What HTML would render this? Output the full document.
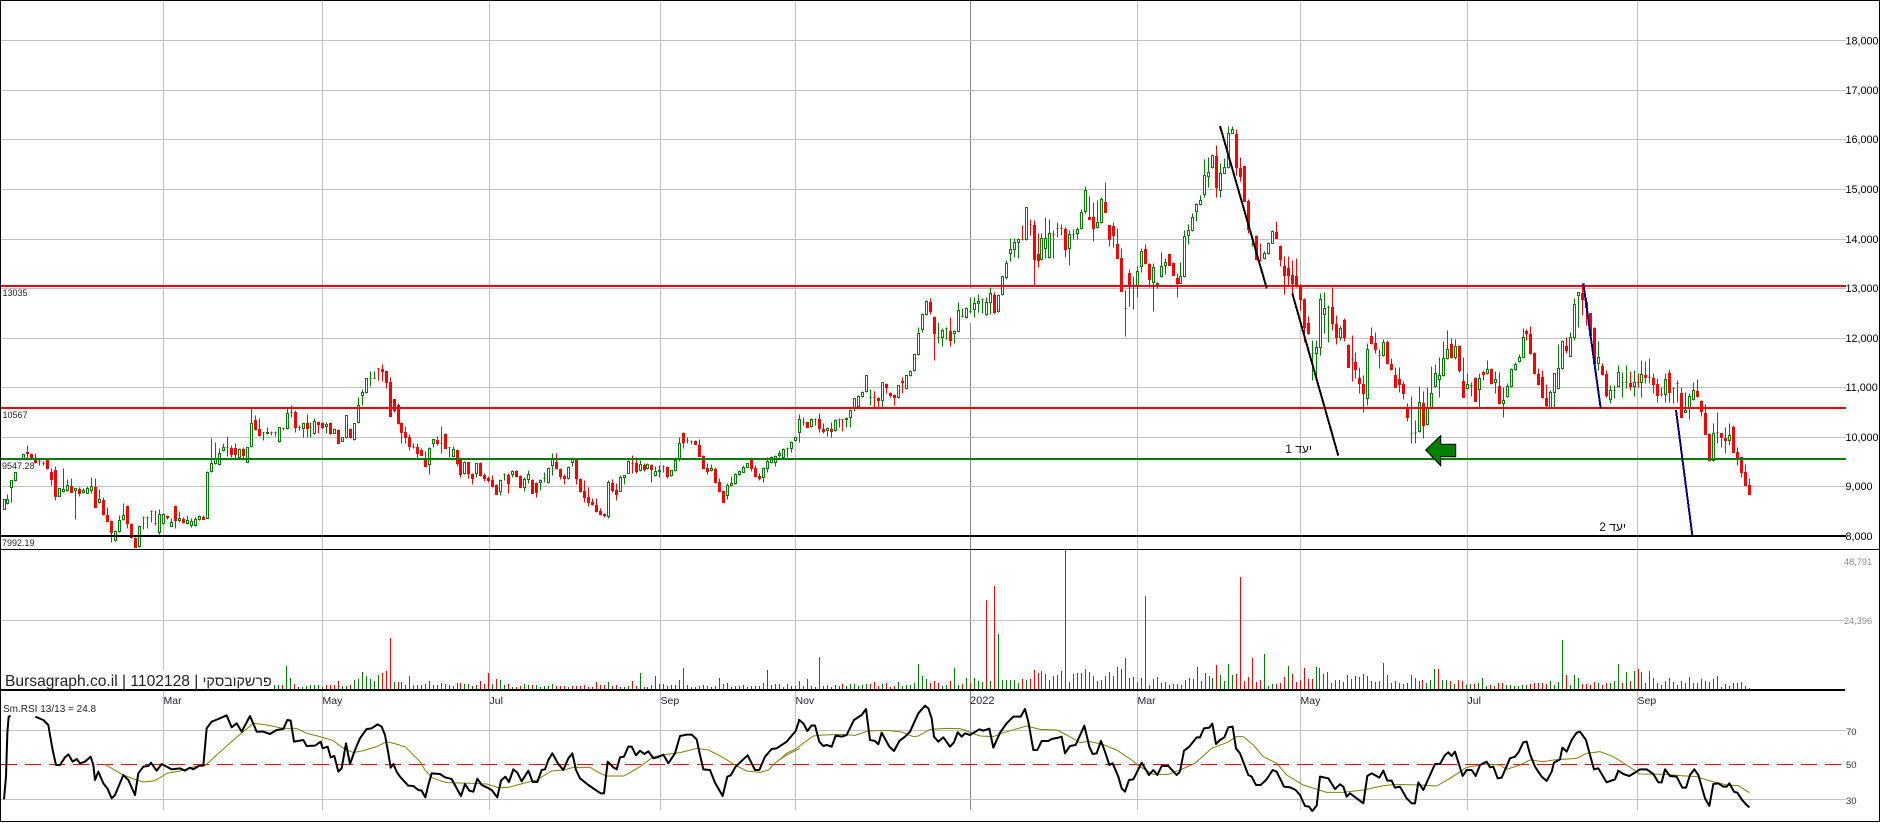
<!DOCTYPE html>
<html>
<head>
<meta charset="utf-8">
<title>Bursagraph chart</title>
<style>
html,body{margin:0;padding:0;background:#fff;width:1880px;height:823px;overflow:hidden}
svg{display:block;position:absolute;left:0;top:0}
text{font-family:"Liberation Sans","Noto Sans CJK JP",sans-serif}
.ax{font-size:10.8px;fill:#000}
.vx{font-size:9.2px;fill:#888}
.rx{font-size:9.5px;fill:#333}
.lb{font-size:9px;fill:#222}
.mo{font-size:10.5px;fill:#223}
.blk{fill:none;stroke:#000;stroke-width:6;stroke-linejoin:round}
.oli{fill:none;stroke:#808000;stroke-width:3}
</style>
</head>
<body>
<svg width="1880" height="823" viewBox="0 0 1880 823" xmlns="http://www.w3.org/2000/svg">
<rect width="1880" height="823" fill="#fff"/>
<path d="M163.5 1V810M322.5 1V810M489.5 1V810M660.5 1V810M795.5 1V810M1137.5 1V810M1300.5 1V810M1467.5 1V810M1637.5 1V810" stroke="#c0c0c0" fill="none"/>
<path d="M970.5 1V288M970.5 323V810" stroke="#888" fill="none"/>
<path d="M1 40.5H1846M1 90.5H1846M1 139.5H1846M1 189.5H1846M1 239.5H1846M1 288.5H1846M1 338.5H1846M1 387.5H1846M1 437.5H1846M1 486.5H1846M1 620.5H1845M1 730.5H1846M1 799.5H1846" stroke="#c0c0c0" fill="none"/>
<path d="M1 764.5H1843" stroke="#f00" stroke-dasharray="16 8" fill="none"/>

<path id="vg" stroke="#008000" fill="none" shape-rendering="crispEdges"/>
<path id="vr" stroke="#f00" fill="none" shape-rendering="crispEdges"/>
<path id="cg" stroke="#008000" fill="#fff" shape-rendering="crispEdges"/>
<path id="cr" stroke="#f00" fill="#f00" shape-rendering="crispEdges"/>

<path d="M1 286H1846M1 408H1846" stroke="#f00" stroke-width="2" fill="none"/>
<path d="M1 459H1846" stroke="#008000" stroke-width="2" fill="none"/>
<path d="M1 536H1846" stroke="#000" stroke-width="2" fill="none"/>
<path d="M1 549.5H1879" stroke="#000" fill="none"/>
<path d="M1 690H1845" stroke="#000" stroke-width="2" fill="none"/>

<path d="M1220 126L1266.7 288.3M1292.3 293.3L1338.3 455.7" stroke="#000" stroke-width="2" fill="none" shape-rendering="crispEdges"/>
<path d="M1583.3 283.3L1600.7 408.3M1676 410L1692.3 535" stroke="#000080" stroke-width="2" fill="none" shape-rendering="crispEdges"/>
<path d="M1425.7 450L1440.7 435.7V444.3H1455.7V456.7H1440.7V465.7Z" fill="#008000" stroke="#000"/>

<g transform="translate(0 400) scale(.33333)">
<path class="oli" d="M315,1093L340,1108L370,1125L410,1140L430,1146L460,1143L480,1133L500,1120L540,1113L590,1098L615,1097L650,1065L700,1020L760,970L800,975L850,985L890,985L920,1000L960,1010L1000,1022L1030,1045L1060,1058L1090,1052L1130,1040L1160,1025L1200,1035"/>
<path class="blk" d="M12,1198L18,1130L22,1000L26,950L32,948M106,950L130,960L145,975L150,1005L158,1050L168,1095L180,1095L195,1072L205,1063L218,1085L230,1077L240,1090L255,1085L272,1070L280,1095L285,1140L295,1115L310,1150L322,1165L335,1195L345,1185L370,1125L385,1140L405,1185L415,1120L430,1100L445,1098L453,1088L470,1112L485,1092L515,1108L540,1105L555,1112L570,1103L580,1108L598,1097L610,1097L620,985L635,965L655,957L680,946L695,982L710,970L725,995L750,948L770,995L790,995L810,1002L830,990L850,987L862,960L872,962L882,1025L910,1020L920,1038L945,1037L962,1025L968,1045L983,1040L992,1072L1003,1068L1015,1115L1025,1105L1038,1030L1050,1092L1065,1050L1080,1015L1100,987L1115,985L1133,973L1145,980L1155,1005L1165,1060L1172,1103L1180,1092L1190,1115L1200,1130"/>
</g>
<g transform="translate(400 540) scale(.33333)">
<path class="oli" d="M0,617L15,620L60,665L75,690L95,712L120,722L140,728L220,730L260,732L295,743L325,742L370,730L410,720L455,693L490,690L520,682L570,682L600,700L620,708L672,708L720,680L760,650L800,643L840,638L890,625L925,630L965,650L1005,675L1040,693L1080,697L1105,690L1130,665L1160,645L1200,625"/>
<path class="blk" d="M0,710L25,737L40,738L55,750L65,752L76,772L85,735L95,700L120,702L135,712L155,717L170,745L183,768L195,732L208,752L220,755L232,716L245,735L262,743L275,750L292,772L303,722L316,710L327,726L340,688L352,698L365,724L385,692L398,726L412,726L425,690L435,688L445,660L457,640L475,672L490,690L505,655L517,640L528,690L540,715L565,735L590,752L602,760L612,760L623,665L640,682L650,688L660,652L672,650L685,620L695,620L708,646L720,632L733,642L745,634L760,655L772,652L790,644L805,670L825,640L840,588L860,584L875,584L890,598L900,645L910,688L930,690L945,728L968,768L982,710L992,706L1007,680L1030,658L1043,646L1065,690L1078,690L1095,650L1115,627L1130,625L1160,605L1187,573L1198,540"/>
</g>
<g transform="translate(780 540) scale(.33333)">
<path class="oli" d="M0,658L20,640L45,628L100,588L130,585L185,583L225,586L265,573L320,571L365,576L400,590L415,588L450,568L500,565L540,566L600,588L640,590L670,578L740,558L780,568L830,570L860,585L900,608L925,604L965,612L1010,630L1055,660L1080,680L1120,703L1165,703L1200,690"/>
<path class="blk" d="M54,540L58,540L70,550L82,573L95,556L105,557L118,605L130,618L140,615L155,620L167,587L185,590L200,585L222,540L245,525L258,507L270,600L285,603L295,613L305,578L328,620L342,633L358,603L375,590L390,575L415,520L435,497L445,505L455,535L462,590L475,605L490,592L510,620L522,607L533,577L545,590L555,580L570,585L598,568L610,572L628,566L640,623L660,578L680,550L700,530L722,530L735,507L745,545L760,630L772,630L785,603L805,603L815,597L835,593L845,590L855,640L870,618L887,615L913,557L928,620L938,642L950,640L963,603L975,635L988,675L998,670L1015,710L1025,745L1035,755L1047,720L1060,718L1085,668L1107,705L1120,690L1132,705L1145,678L1165,678L1190,705L1200,695"/>
</g>
<g transform="translate(1130 540) scale(.33333)">
<path class="oli" d="M150,690L195,670L245,625L290,608L320,590L340,590L370,615L400,650L440,670L470,705L520,735L590,757L640,757L700,750L760,737L800,733L870,735L920,738L960,715L1010,682L1070,672L1110,675L1130,688L1170,675L1200,660"/>
<path class="blk" d="M150,695L162,632L178,620L200,592L210,592L222,565L238,563L247,551L258,612L270,600L283,592L295,562L308,560L318,625L330,640L355,705L365,710L378,735L392,735L410,718L428,690L440,695L462,740L480,742L497,750L510,765L525,798L537,800L547,813L560,797L570,710L595,715L615,747L630,733L640,740L650,770L660,760L700,790L712,708L725,700L748,713L760,692L772,722L785,722L795,743L810,740L830,775L845,790L855,790L865,727L880,750L915,672L930,672L945,645L955,637L965,648L975,635L998,708L1010,690L1025,690L1037,708L1050,675L1070,665L1080,682L1090,680L1103,715L1115,713L1140,655L1155,650L1165,638L1180,607L1190,605L1200,642"/>
</g>
<g transform="translate(1480 400) scale(.33333)">
<path class="oli" d="M150,1080L190,1085L220,1080L290,1075L320,1060L360,1055L400,1070L440,1095L480,1122L560,1123L600,1127L650,1130L680,1140L740,1155L775,1157L808,1178"/>
<path class="blk" d="M150,1062L165,1100L185,1130L200,1143L215,1115L222,1088L240,1078L247,1043L260,1055L275,1020L290,998L300,995L318,1020L330,1065L342,1108L355,1105L380,1147L405,1138L415,1112L430,1122L448,1128L465,1118L480,1108L500,1108L520,1122L535,1147L545,1147L555,1108L570,1128L590,1130L607,1163L618,1163L630,1125L643,1108L655,1125L675,1195L688,1218L700,1152L715,1150L730,1160L740,1160L748,1150L762,1175L772,1178L785,1198L797,1212L808,1222"/>
</g>

<rect x="4" y="670" width="268" height="19" fill="#fff"/>
<text x="5" y="686" style="font-size:15.6px;fill:#222">Bursagraph.co.il | 1102128 | <tspan style="font-size:14.3px">פרשקובסקי</tspan></text>

<text class="ax" x="1845.5" y="44.5">18,000</text>
<text class="ax" x="1845.5" y="94">17,000</text>
<text class="ax" x="1845.5" y="143">16,000</text>
<text class="ax" x="1845.5" y="193">15,000</text>
<text class="ax" x="1845.5" y="243">14,000</text>
<text class="ax" x="1845.5" y="292">13,000</text>
<text class="ax" x="1845.5" y="342">12,000</text>
<text class="ax" x="1845.5" y="391">11,000</text>
<text class="ax" x="1845.5" y="441">10,000</text>
<text class="ax" x="1845.5" y="490">9,000</text>
<text class="ax" x="1845.5" y="540">8,000</text>
<text class="vx" x="1844" y="565">48,791</text>
<text class="vx" x="1844" y="624">24,396</text>
<text class="rx" x="1846" y="735">70</text>
<text class="rx" x="1846" y="768">50</text>
<text class="rx" x="1846" y="804">30</text>

<text class="lb" x="2.5" y="296">13035</text>
<text class="lb" x="2.5" y="418">10567</text>
<text class="lb" x="2" y="469">9547.28</text>
<text class="lb" x="2" y="546">7992.19</text>
<text x="3" y="712" style="font-size:10px;fill:#222">Sm.RSI 13/13 = 24.8</text>

<text class="mo" x="163.5" y="704">Mar</text>
<text class="mo" x="322.5" y="704">May</text>
<text class="mo" x="489.5" y="704">Jul</text>
<text class="mo" x="660.5" y="704">Sep</text>
<text class="mo" x="795.5" y="704">Nov</text>
<text class="mo" x="970" y="704" style="font-size:11px">2022</text>
<text class="mo" x="1137.5" y="704">Mar</text>
<text class="mo" x="1300.5" y="704">May</text>
<text class="mo" x="1467.5" y="704">Jul</text>
<text class="mo" x="1637.5" y="704">Sep</text>

<text x="1312" y="453" style="font-size:12px;fill:#112;direction:rtl">יעד 1</text>
<text x="1626" y="531" style="font-size:12px;fill:#111;direction:rtl">יעד 2</text>

<rect x=".5" y=".5" width="1879" height="821" fill="none" stroke="#000"/>
</svg>
<script>
var C=[
[4,398.7,400,"g298,328,298,328 g298,310,283,312 g241,260,241,305 g217,240,217,243 g178,178,176,180 g163,175,163,178 r157,160,135,175 r162,175,160,178 r180,185,160,190 r182,182,178,195 r188,188,183,195 r178,203,178,207 r215,237,205,255 r210,288,197,300 g265,288,265,288 g268,272,205,275 g255,270,238,272 r258,275,235,277 g265,270,265,357 r267,280,262,287 g270,275,265,280 g265,278,258,280 g258,270,232,280 r262,322,235,322 g297,307,268,310 r300,343,290,345 r345,362,320,362 r363,395,360,425 g393,421,390,423 g360,392,345,395 g345,358,310,360 r318,370,315,385 r372,410,368,415 r413,440,410,440 g377,438,375,440 g350,350,347,387 g350,350,347,385 r332,332,330,365 r368,368,330,375 g343,397,328,402 g343,370,340,372 r347,352,345,358 g365,377,355,378 r318,360,316,385 g355,360,332,365 r358,367,350,368 g360,368,345,372 g362,375,355,382 g358,375,350,378 g349,356,345,360 r350,356,345,358 g215,355,213,355 g188,213,115,215 g178,188,125,192 g158,192,145,195 g142,150,128,153 g140,140,108,168 r145,162,135,172 r145,162,130,175 g146,172,143,175 r148,165,140,175 g140,185,140,187 g68,138,25,140 r60,88,45,90 r88,105,55,107 g97,97,95,120 g95,100,82,103 r97,97,92,105 g97,97,92,108 g82,122,80,125 r85,85,82,90 g40,85,25,87 g35,35,15,50 r35,80,30,95 r82,82,75,90 g68,85,68,110 r68,85,42,110 g80,80,65,110 g62,98,55,103 r67,72,62,100 r68,80,65,85 g72,78,65,100 r68,100,65,102 g88,98,85,100 r90,128,88,130 g112,122,110,124 g45,112,45,114 r88,112,85,115 g68,118,68,120 g15,65,-10,68 g-25,-15,-32,15 g-65,-25,-65,-20 g-65,-65,-87,-42 g-65,-65,-88,-65 r-95,-95,-95,-60 r-92,-88,-108,-58 r-87,-55,-87,-35 r-53,48,-70,48 r-2,30,-2,35 r15,70,8,72"],
[401.3,779.3,340,"r248,275,245,308 r277,290,258,308 r290,318,282,330 r320,320,310,325 r322,338,308,353 r330,345,325,345 r360,377,332,377 g323,372,320,402 g298,310,298,320 r300,308,288,315 g308,308,258,338 r282,323,280,325 g322,322,322,350 g328,347,318,350 r330,368,328,378 r358,402,350,410 g365,400,362,402 r367,400,365,414 r402,413,400,432 g370,398,370,410 r368,405,366,408 r405,413,400,423 r415,420,407,425 r420,438,405,440 r435,461,432,461 g420,452,418,465 g403,403,400,420 r405,430,400,458 g392,402,390,410 r394,407,390,410 r408,440,405,442 g418,440,410,452 g403,417,390,430 r420,458,418,460 r430,455,425,470 g421,427,418,450 g415,415,395,427 g383,425,380,428 g355,375,340,405 r365,385,340,388 r387,408,383,418 r408,415,403,432 g380,415,378,417 g357,367,350,378 r360,415,358,432 r418,452,415,455 r453,470,420,485 r472,485,442,497 r487,493,475,495 r495,512,475,516 r513,522,505,525 r523,526,518,530 g427,527,420,533 r430,450,418,455 r450,462,430,480 g411,452,405,453 g406,410,405,432 g363,398,360,400 r368,368,345,400 r370,393,352,398 g373,390,360,392 r375,387,370,392 g372,385,368,388 r376,388,372,426 g394,406,378,408 g389,394,375,412 r379,379,376,395 r382,407,378,413 g391,406,390,408 g360,390,352,392 g310,358,292,362 r280,305,276,323 g300,300,292,308 g302,302,300,313 r303,311,300,312 r316,347,298,348 r349,383,346,385 r385,392,370,402 g385,391,372,393 r388,426,380,428 r427,452,415,455 r453,485,450,485 g436,465,428,478 g429,436,408,437 g403,430,398,432 g393,403,390,405 g382,395,376,397 g370,380,368,382 r358,383,350,392 r385,408,375,410 r408,413,398,420 g383,412,380,425 g363,385,350,395 g350,366,348,368 g347,367,345,377 g340,346,330,350"],
[783.3,1177.3,180,"g808,830,803,832 g805,805,800,830 g785,805,783,815 g772,780,770,782 g717,757,702,785 r725,725,712,735 r727,740,725,742 g717,738,715,740 g716,716,714,735 r717,745,700,755 r748,752,730,760 g745,750,742,768 r748,752,725,770 g720,750,716,752 g716,716,714,740 r718,718,718,752 g713,718,712,740 g690,710,688,740 g655,680,655,692 g647,678,645,680 g635,647,633,650 g586,632,586,635 g650,650,628,675 r652,652,632,682 r655,660,650,682 g607,660,605,680 r612,622,610,638 r640,645,635,652 r645,652,642,675 g616,650,615,655 r604,607,590,638 g585,625,585,627 g573,585,570,587 g523,570,522,572 g460,522,440,524 g403,448,400,455 g363,402,360,404 r366,392,353,402 r410,458,408,540 g470,470,425,490 g450,472,445,497 g445,445,442,478 r453,480,412,497 g453,458,450,490 g390,453,365,455 g408,408,385,412 g385,410,380,415 g392,392,352,400 g370,388,350,410 g362,370,342,395 g358,358,355,398 g367,402,352,405 g340,367,322,403 r345,395,335,398 g345,393,343,395 g288,342,288,345 g250,292,240,296 g208,220,175,242 g186,206,175,232 g176,185,175,233 r178,178,135,180 g82,177,82,180 r132,132,118,165 r135,236,120,316 r222,240,160,260 g175,238,158,240 g175,205,112,235 g160,230,118,235 r162,162,150,233 g143,143,127,170 r145,145,133,165 r148,206,140,230 g162,204,150,254 g162,162,148,178 g148,160,140,176 g97,145,88,147 g30,92,18,98 r112,116,48,116 r112,143,66,182 g127,142,60,143 g58,126,50,128 r65,95,6,95 r135,176,135,197 r138,164,125,200 r192,233,145,233 r234,332,205,332 g383,383,330,467 r280,318,268,378 g318,318,288,387 g274,318,258,350 g212,258,203,275 r208,250,192,252 r252,298,250,322 g262,306,248,392 g308,313,306,325 g257,288,217,290 g247,256,235,282 r222,254,218,256 r250,284,247,286 r294,308,280,350"],
[1180.7,1523.3,110,"g498,518,455,520 g377,498,360,500 g360,375,342,402 g320,360,308,362 g283,303,278,332 g270,282,255,285 g195,252,148,262 g187,197,140,230 g136,172,132,175 r138,232,105,260 g190,240,160,262 g172,188,145,190 g70,170,48,175 g58,68,48,70 r72,170,58,195 r175,197,140,212 r168,272,165,272 r272,358,268,370 g403,403,375,408 r378,448,375,450 r450,450,400,452 g430,445,422,447 g398,430,395,432 g363,398,360,400 r367,383,333,385 r407,446,405,468 r468,495,437,552 r475,495,437,525 r495,520,450,550 r498,527,445,530 r525,567,522,600 r568,650,565,695 r640,668,618,672 g730,730,690,810 g712,730,690,812 g568,710,550,735 g595,612,545,670 g590,590,585,695 r592,640,530,660 r642,680,615,702 g655,680,645,690 r630,680,625,692 r705,770,703,772 r748,748,675,812 r755,776,725,805 r805,820,772,850 r823,850,795,905 g718,865,698,885 r678,700,650,702 r700,717,665,730 r735,735,718,775 g695,736,688,738 r695,760,690,762 r763,777,745,780 r795,830,772,832 r808,821,772,845 r823,850,812,866 r892,920,880,932 g970,970,858,1000 g965,965,930,1000 g877,962,828,965 r880,945,842,985 g895,942,832,944 g850,895,768,898 g790,828,762,830 g795,808,740,860 g745,795,692,797 g718,745,660,747 r702,742,685,745 g708,740,688,748 r708,780,705,785 r813,860,740,860 g823,835,790,837 g825,825,815,858 r803,872,800,872 g805,838,790,890 r785,792,780,810 g778,790,750,792 r778,820,775,822 g808,815,782,850 r828,880,785,882 g871,878,830,922 g828,858,820,860 g778,828,775,830 g762,778,755,780 g742,752,733,755 g682,740,655,742"],
[1526.7,1749.3,0,"r993,1000,988,1020 r1003,1060,978,1062 r1058,1120,1055,1122 r1122,1152,1105,1155 r1132,1192,1110,1195 r1195,1215,1152,1225 g1175,1225,1170,1225 g1118,1175,1118,1222 g1105,1165,1033,1167 g1022,1105,1020,1107 r1038,1050,1012,1060 g1010,1067,997,1068 g912,1010,895,1020 g877,885,875,980 r880,898,850,945 r905,920,890,975 r940,1005,940,1005 r985,1090,982,1092 g1072,1090,1022,1110 r1098,1122,1090,1125 r1122,1185,1110,1190 g1170,1197,1155,1210 g1170,1170,1155,1195 g1117,1157,1095,1162 g1147,1147,1115,1190 g1147,1147,1095,1165 r1150,1157,1113,1170 g1145,1157,1110,1187 r1147,1147,1118,1160 g1122,1147,1080,1190 r1125,1130,1082,1148 r1132,1132,1075,1150 r1135,1152,1118,1180 r1153,1185,1135,1205 r1183,1183,1160,1188 g1138,1183,1120,1205 r1120,1175,1108,1205 g1165,1165,1162,1210 r1150,1150,1140,1205 r1180,1250,1160,1250 g1230,1235,1175,1237 g1188,1225,1180,1256 g1170,1197,1145,1200 r1173,1187,1137,1190 r1203,1232,1200,1247 r1240,1302,1213,1302 r1302,1380,1300,1382 g1300,1380,1268,1382 g1297,1297,1237,1330 r1300,1312,1298,1340 r1315,1320,1280,1360 g1305,1320,1268,1335 r1282,1355,1275,1357 r1357,1372,1342,1395 r1372,1415,1370,1432 r1417,1455,1393,1455 r1456,1482,1435,1482"]
];
var V=[
[274,398,868,"g855 g855 r855 g800 g835 r852 r862 g862 g858 g856 g856 g855 g862 r856 r856 r856 r843 g860 g860 r856 g840 g838 g816 g830 g838 g845 g825 r820 r815 r715 g848 r848"],
[401.3,779.3,450,"r430 r438 r411 r438 r438 r438 r435 g426 g438 g438 g432 r435 g438 r441 r432 r432 g435 g435 r441 g438 r426 r435 r402 g435 r420 g423 g438 r435 g444 r444 r441 g435 g438 r438 g438 g444 g440 g441 g435 r441 r441 r441 g444 r441 r441 r441 r438 r444 r444 r429 r438 r438 g429 r441 r438 g444 g444 g441 r426 r441 g402 r444 r444 r438 r411 g435 g435 g441 g438 g438 g423 g387 g438 g444 g444 r441 r438 r441 r444 r441 r417 r435 g432 g444 g441 g441 g438 g444 r441 r441 r441 g432 g393 g438 g435 g435"],
[783.3,1177.3,450,"g444 g435 g441 g441 g426 r441 r420 g441 g444 r354 r441 g438 r444 g438 g441 r435 g441 g435 g435 g441 g438 g435 r435 r429 r441 g435 r432 r444 r441 g429 g441 g438 g438 g432 g375 g411 g420 r432 r426 r432 g441 g438 r426 g387 g438 r435 g417 r432 g417 g426 g429 r183 g426 r141 g285 g423 g423 g423 g423 g432 r420 g423 r420 r393 r402 g396 g405 g423 r411 g408 g396 r33 g429 g405 g402 g402 g390 r399 r411 g426 g423 r411 r399 g411 r384 r390 r357 g417 r414 g429 g417 r171 r438 g420 r414 g432 g429 r438 r435 r435"],
[1181.3,1526,450,"g438 g423 g417 g420 g384 g426 g402 g411 g417 r378 g408 g426 g375 g408 r405 r114 r426 r414 r357 r429 r423 g345 g441 g435 r435 r432 r414 g381 r405 r429 r423 r387 r420 r420 g384 g387 g405 g399 r432 r423 r423 r429 r408 g420 r411 r414 r405 g411 g426 r429 r426 g372 r408 g432 r426 g432 r435 r432 r408 g417 g426 r423 g432 g423 g390 r390 g423 g423 r426 g435 r423 r426 g438 g435 r435 g432 g417 g441 r438 g441 r432 r432 g438 g438 g441 g441 g438 g438"],
[1530.7,1749.3,868,"r852 r850 r850 r850 r852 g843 g856 g846 g720 r825 g855 g825 g834 r852 r852 r855 r846 g850 r856 r850 g850 g843 g792 r850 g816 r843 g813 r807 g816 r850 r813 r835 r850 r856 r843 r835 r846 r855 r843 g850 g831 r850 r850 r838 r843 r846 g838 g828 r862 r852 r858 r850 r850 r846 r858 r865"]
];
var d={g:"",r:""},e={g:"",r:""};
C.forEach(function(s){
  var t=s[3].split(" "),n=t.length;
  t.forEach(function(k,i){
    var c=k[0],a=k.slice(1).split(",").map(function(v){return Math.round(s[2]+parseFloat(v)/3)+.5});
    var x=Math.floor(s[0]+(s[1]-s[0])*i/(n-1))+.5;
    d[c]+="M"+x+" "+a[2]+"V"+a[0]+"M"+(x-1)+" "+a[0]+"h2v"+(a[1]-a[0])+"h-2zM"+x+" "+a[1]+"V"+a[3];
  });
});
V.forEach(function(s){
  var t=s[3].split(" "),n=t.length;
  t.forEach(function(k,i){
    var c=k[0],v=(s[2]-parseFloat(k.slice(1)))/3;
    var x=Math.floor(s[0]+(s[1]-s[0])*i/(n-1))+.5;
    e[c]+="M"+x+" 689V"+Math.round(689-v);
  });
});
document.getElementById("cg").setAttribute("d",d.g);
document.getElementById("cr").setAttribute("d",d.r);
document.getElementById("vg").setAttribute("d",e.g);
document.getElementById("vr").setAttribute("d",e.r);
</script>
</body>
</html>
